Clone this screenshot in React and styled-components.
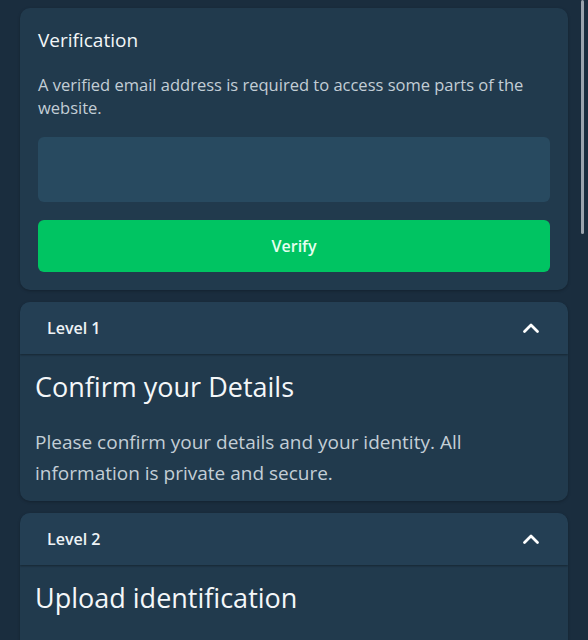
import React from "react";
import styled, { createGlobalStyle } from "styled-components";

const GlobalStyle = createGlobalStyle`
  html, body {
    margin: 0;
    padding: 0;
    background: #1a2d3e;
    font-family: "Open Sans", "Liberation Sans", sans-serif;
    color: #e8eef2;
    overflow: hidden;
  }
`;

const Page = styled.div`
  display: flex;
  height: 640px;
`;

const Content = styled.div`
  flex: 1;
  display: flex;
  flex-direction: column;
  gap: 12px;
  padding: 8px 9px 0 20px;
  overflow: hidden;
`;

const ScrollTrack = styled.div`
  width: 11px;
  display: flex;
  justify-content: center;
`;

const ScrollThumb = styled.div`
  width: 3px;
  height: 234px;
  border-radius: 2px;
  background: #9aa3ad;
`;

const Card = styled.section`
  background: #213a4d;
  border-radius: 10px;
  box-shadow: 0 1px 3px rgba(0, 0, 0, 0.25);
  flex-shrink: 0;
  overflow: hidden;
`;

const VerifyBody = styled.div`
  display: flex;
  flex-direction: column;
  padding: 19px 18px 18px 18px;
`;

const CardTitle = styled.h2`
  margin: 0;
  font-size: 19px;
  font-weight: 400;
  line-height: 26px;
  color: #f2f6f8;
`;

const Note = styled.p`
  margin: 20px 0 0;
  font-size: 16.5px;
  line-height: 23px;
  color: #c3ced6;
`;

const Field = styled.input`
  margin-top: 18px;
  height: 65px;
  border: none;
  border-radius: 6px;
  background: #284a60;
  outline: none;
  padding: 0 16px;
  font: inherit;
  color: #fff;
`;

const Button = styled.button`
  margin-top: 18px;
  height: 52px;
  border: none;
  border-radius: 6px;
  background: #00c462;
  color: #e6fff0;
  font-family: inherit;
  font-size: 16px;
  font-weight: 600;
`;

const Header = styled.div`
  display: flex;
  align-items: center;
  justify-content: space-between;
  height: 52px;
  padding: 0 28px 0 27px;
  background: #243f54;
  box-shadow: 0 1px 2px rgba(0, 0, 0, 0.35);
  position: relative;
`;

const Level = styled.span`
  font-size: 16px;
  font-weight: 600;
  color: #eef3f6;
`;

const Chevron = () => (
  <svg width="18" height="12" viewBox="0 0 18 12" fill="none">
    <path
      d="M2.5 9.5 L9 3 L15.5 9.5"
      stroke="#ffffff"
      strokeWidth="2.8"
      strokeLinecap="round"
      strokeLinejoin="round"
    />
  </svg>
);

const StepBody = styled.div`
  padding: 15px 18px 12px 15px;
`;

const StepTitle = styled.h3`
  margin: 0;
  font-size: 27px;
  font-weight: 400;
  line-height: 36px;
  color: #f4f7f9;
`;

const StepText = styled.p`
  margin: 22px 0 0;
  font-size: 19px;
  line-height: 31px;
  color: #c3ced6;
`;

const steps = [
  {
    level: "Level 1",
    title: "Confirm your Details",
    text: "Please confirm your details and your identity. All information is private and secure.",
  },
  {
    level: "Level 2",
    title: "Upload identification",
    text: "Please upload a photo of your identification document.",
  },
];

export default function App() {
  return (
    <Page>
      <GlobalStyle />
      <Content>
        <Card>
          <VerifyBody>
            <CardTitle>Verification</CardTitle>
            <Note>
              A verified email address is required to access some parts of the
              website.
            </Note>
            <Field type="email" aria-label="Email address" />
            <Button type="button">Verify</Button>
          </VerifyBody>
        </Card>
        {steps.map((step) => (
          <Card key={step.level}>
            <Header>
              <Level>{step.level}</Level>
              <Chevron />
            </Header>
            <StepBody>
              <StepTitle>{step.title}</StepTitle>
              <StepText>{step.text}</StepText>
            </StepBody>
          </Card>
        ))}
      </Content>
      <ScrollTrack>
        <ScrollThumb />
      </ScrollTrack>
    </Page>
  );
}
